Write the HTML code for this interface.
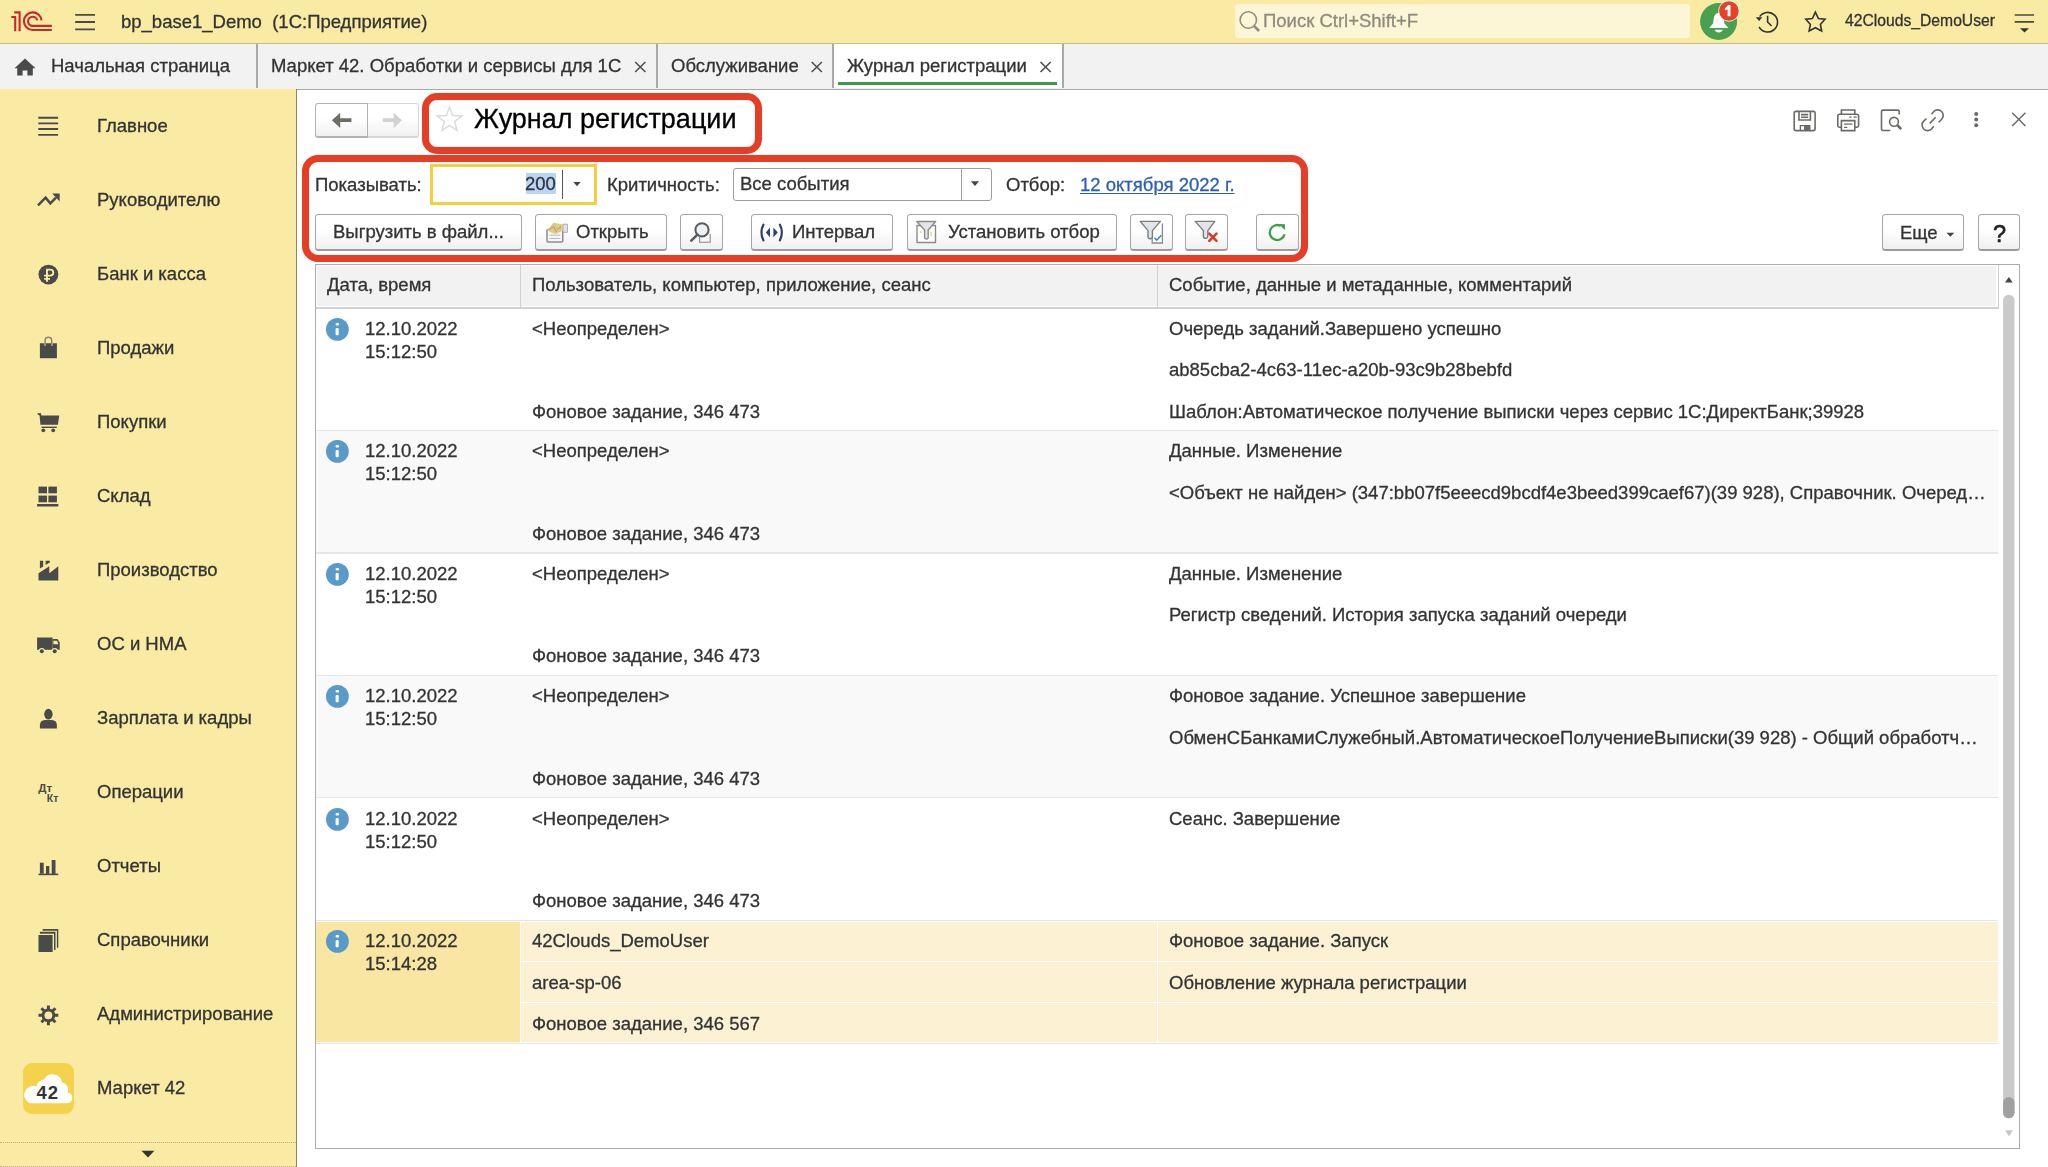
<!DOCTYPE html>
<html lang="ru"><head><meta charset="utf-8"><title>Журнал регистрации</title>
<style>
*{box-sizing:border-box;margin:0;padding:0}
html,body{width:2048px;height:1167px;overflow:hidden;background:#fff}
body{-webkit-font-smoothing:antialiased;position:relative;font-family:"Liberation Sans",sans-serif;font-size:18.5px;line-height:20px;color:#333}
.a{position:absolute}
.t{position:absolute;will-change:transform;-webkit-text-stroke:0.3px currentColor;white-space:nowrap;font-size:18.5px;line-height:20px}
#hdr{left:0;top:0;width:2048px;height:44px;background:#f9eba3;border-bottom:1px solid #c6ba7c}
#tabs{left:0;top:44px;width:2048px;height:45.5px;background:#f2f2f2;border-bottom:1.5px solid #a9a9a9}
.tsep{position:absolute;top:44px;width:1.5px;height:44px;background:#a9a9a9}
#side{left:0;top:89px;width:297px;height:1078px;background:#f9eba3;border-right:1px solid #8f8761}
.btn{position:absolute;height:37.8px;border:1.2px solid #a6a6a6;border-bottom:2.6px solid #9c9c9c;border-radius:3.5px;background:linear-gradient(#fff,#fff 40%,#f0f0f0)}
.red{position:absolute;border:7px solid #e63e26;border-radius:15px}
</style></head><body>

<!-- header -->
<div id="hdr" class="a"></div>
<svg class="a" style="left:0;top:0" width="60" height="44" viewBox="0 0 60 44" fill="none" stroke="#c9282b" stroke-width="2.1">
<path d="M11.3 17H15.2V31.2M14.2 12.4H19.6V31.2"/>
<path d="M41.5 20.4A8.8 8.8 0 1 0 32.7 30H51.8"/>
<path d="M37.2 20.4A4.6 4.6 0 1 0 32.7 25.9H51.8"/>
</svg>
<svg class="a" style="left:70px;top:8px" width="30" height="28" viewBox="70 8 30 28" stroke="#4a4a4a" stroke-width="1.8">
<path d="M75.2 14.9H95M75.2 22H95M75.2 29.3H95"/>
</svg>
<div class="t" style="left:121px;top:12px">bp_base1_Demo&nbsp; (1С:Предприятие)</div>
<div class="a" style="left:1235px;top:4px;width:455px;height:34px;background:#fcf5d6;border-radius:3px"></div>
<svg class="a" style="left:1230px;top:0" width="40" height="44" viewBox="1230 0 40 44" fill="none" stroke="#8f8c80" stroke-width="1.6">
<circle cx="1248.3" cy="20" r="8.2"/><path d="M1254.3 26.2L1259 31" stroke-width="2.6"/>
</svg>
<div class="t" style="left:1263px;top:11px;color:#8e8b7e">Поиск Ctrl+Shift+F</div>
<svg class="a" style="left:1690px;top:0" width="60" height="44" viewBox="1690 0 60 44">
<circle cx="1718.6" cy="21.5" r="18.5" fill="#49a04f"/>
<path d="M1718.6 13C1715.6 13 1714.2 15.5 1713.7 19L1713 23.5L1709.2 28H1728.4L1724.5 23.5L1723.6 19C1723.1 15.5 1721.6 13 1718.6 13ZM1714.7 29.8H1722.8C1722 31.6 1720.6 32.4 1718.75 32.4C1716.9 32.4 1715.5 31.6 1714.7 29.8Z" fill="#fff"/>
<circle cx="1728.9" cy="11" r="10.7" fill="#fff" opacity=".75"/>
<circle cx="1728.9" cy="11" r="9.8" fill="#e8412a"/>
<path d="M1727.6 16.2V9.2L1724.9 10.4V8.4L1728.1 4.9H1730.5V16.2Z" fill="#fff"/>
</svg>
<svg class="a" style="left:1750px;top:0" width="90" height="44" viewBox="1750 0 90 44" fill="none" stroke="#333" stroke-width="1.6">
<path d="M1759.7 16.6A9.8 9.8 0 1 1 1759.1 26.8"/>
<path d="M1755.8 17.2H1762.3L1759.1 20.9Z" fill="#333" stroke="none"/>
<path d="M1767.6 15.8V22L1771.6 26"/>
<path d="M1815.4 12.2L1818.4 18.6L1825 19.2L1820.4 24.4L1821.7 31L1815.4 27.7L1809.1 31L1810.4 24.4L1805.8 19.2L1812.4 18.6Z" stroke-linejoin="miter"/>
</svg>
<div class="t" style="left:1845px;top:11px;font-size:15.7px;color:#333">42Clouds_DemoUser</div>
<svg class="a" style="left:2010px;top:8px" width="30" height="30" viewBox="2010 8 30 30">
<path d="M2014.7 15H2034M2014.7 21.8H2034" stroke="#4a4a4a" stroke-width="1.7"/>
<path d="M2020 28.2H2029L2024.5 32.6Z" fill="#333"/>
</svg>

<!-- tabs -->
<div id="tabs" class="a"></div>
<div class="a" style="left:833px;top:44px;width:229px;height:44px;background:#fff"></div>
<div class="tsep" style="left:256px"></div>
<div class="tsep" style="left:656px"></div>
<div class="tsep" style="left:832px"></div>
<div class="tsep" style="left:1062px"></div>
<svg class="a" style="left:10px;top:52px" width="30" height="30" viewBox="10 52 30 30">
<path d="M25 58.5L14.5 68.3H17.2V75.6H22.6V70.6H27.4V75.6H32.8V68.3H35.5Z" fill="#4a4a4a"/>
</svg>
<div class="t" style="left:51px;top:56px">Начальная страница</div>
<div class="t" style="left:271px;top:56px">Маркет 42. Обработки и сервисы для 1С</div>
<div class="t" style="left:671px;top:56px">Обслуживание</div>
<div class="t" style="left:847px;top:56px">Журнал регистрации</div>
<svg class="a" style="left:0;top:50px" width="1070" height="30" viewBox="0 50 1070 30" stroke="#4a4a4a" stroke-width="1.5">
<path d="M635.2 62L645.4 72M645.4 62L635.2 72"/>
<path d="M811.7 62L821.9 72M821.9 62L811.7 72"/>
<path d="M1040.5 62L1050.7 72M1050.7 62L1040.5 72"/>
</svg>
<div class="a" style="left:838px;top:82px;width:219px;height:3px;background:#3b9a4a"></div>

<!-- sidebar -->
<div id="side" class="a"></div>
<svg class="a" style="left:0;top:89px" width="296" height="1078" viewBox="0 89 296 1078" fill="#4a4a4a">
<path d="M38.3 117.7H58.1M38.3 123.4H58.1M38.3 129H58.1M38.3 134.9H58.1" stroke="#4a4a4a" stroke-width="1.9"/>
<path d="M38 205.3L45.6 197.7L50.3 203.4L56 197.6" fill="none" stroke="#4a4a4a" stroke-width="2.5"/>
<path d="M52.2 193.6H59.7V201.4Z"/>
<circle cx="48.4" cy="274.6" r="9.9"/>
<path d="M47 281.7V269.6H50.3A3 3 0 0 1 50.3 275.6H44.2M44.2 278.9H50" fill="none" stroke="#f9eba3" stroke-width="1.9"/>
<path d="M39.9 343.3H44.3V346H45.9V343.3H51V346H52.6V343.3H56.9V358.3H39.9Z"/>
<path d="M45.1 346V340.5A3.2 3.2 0 0 1 51.7 340.5V346" fill="none" stroke="#8c8770" stroke-width="1.5"/>
<path d="M37.1 413.7H40.9L41.5 415.4H59.3L57.9 424.8H40.4L39.6 415.5" /><path d="M37.1 413.2H41V415.5H39.6Z"/>
<path d="M41.5 427.3H56.8" stroke="#4a4a4a" stroke-width="1.4"/>
<circle cx="43.3" cy="430.3" r="1.9"/><circle cx="53.2" cy="430.3" r="1.9"/>
<rect x="38.5" y="486.6" width="8.5" height="6.7"/><rect x="48.4" y="486.6" width="8.5" height="6.7"/>
<rect x="38.5" y="495.6" width="8.5" height="6.7"/><rect x="48.4" y="495.6" width="8.5" height="6.7"/>
<rect x="37.1" y="504" width="21.2" height="2.5"/>
<path d="M38.5 580.5V573.2L49.3 566.3V573.2L58.3 566.3V580.5Z"/>
<path d="M39.9 560.7H43.2V566.6L39.9 568.6Z"/><path d="M45.6 560.7H49.8V562.4L45.6 565Z"/>
<path d="M37.1 637.5H52.6V649.8H37.1Z"/><path d="M52.6 639H57.5L59.7 642.5V649.8H52.6Z"/>
<path d="M53.4 640.8H57L58.4 644.2H53.4Z" fill="#f9eba3"/>
<circle cx="41.8" cy="651.2" r="3.1" fill="#f9eba3"/><circle cx="54.7" cy="651.2" r="3.1" fill="#f9eba3"/>
<circle cx="41.8" cy="651.2" r="2"/><circle cx="54.7" cy="651.2" r="2"/>
<ellipse cx="48.4" cy="714.2" rx="4.2" ry="5.4"/>
<path d="M39.9 728.6V725A5.3 5.3 0 0 1 45 720H51.8A5.3 5.3 0 0 1 56.9 725V728.6Z"/>
<text x="38.3" y="792" font-family="Liberation Sans" font-weight="bold" font-size="11.5">Дт</text>
<text x="46.8" y="802.4" font-family="Liberation Sans" font-weight="bold" font-size="10.5">Кт</text>
<rect x="38.5" y="873.6" width="19.8" height="1.6"/>
<rect x="39.9" y="862.7" width="3.8" height="11"/><rect x="46" y="866" width="3.3" height="8"/><rect x="51.7" y="860" width="3.8" height="14"/>
<path d="M42.7 929H58.3V947.8H56.9V930.8H42.7Z"/><path d="M39.9 931.8H55.5V950H54V933.7H39.9Z"/>
<rect x="38.5" y="935" width="14.1" height="17"/>
<g transform="translate(48.4 1015.3)">
<path d="M0-9.9V9.9M-9.9 0H9.9M-7-7L7 7M-7 7L7-7" stroke="#4a4a4a" stroke-width="3"/>
<circle r="6.9"/><circle r="3.9" fill="#f9eba3"/>
</g>
</svg>
<div class="a" style="left:23px;top:1063px;width:51px;height:51px;border-radius:9px;background:#f5d24b"></div>
<svg class="a" style="left:23px;top:1063px" width="51" height="51" viewBox="23 1063 51 51">
<path d="M30 1103.3H66A5.5 5.5 0 0 0 67.5 1092.3A7 7 0 0 0 62 1082.5A9.5 9.5 0 0 0 44.2 1079.5A8 8 0 0 0 36.5 1086.5A8.5 8.5 0 0 0 30 1103.3Z" fill="#fff"/>
<text x="36.6" y="1099.3" font-family="Liberation Sans" font-weight="bold" font-size="18.5" fill="#333" textLength="21.5">42</text>
</svg>
<div class="a" style="left:0;top:1142px;width:296px;height:0;border-top:1.2px dotted #bdb27c"></div><div class="a" style="left:0;top:1166px;width:296px;height:0;border-top:1.2px dotted #bdb27c"></div>
<svg class="a" style="left:138px;top:1148px" width="20" height="12" viewBox="138 1148 20 12"><path d="M141.5 1150.7H154.4L148 1157.5Z" fill="#333"/></svg>
<div class="t" style="left:97px;top:116px">Главное</div>
<div class="t" style="left:97px;top:190px">Руководителю</div>
<div class="t" style="left:97px;top:264px">Банк и касса</div>
<div class="t" style="left:97px;top:338px">Продажи</div>
<div class="t" style="left:97px;top:412px">Покупки</div>
<div class="t" style="left:97px;top:486px">Склад</div>
<div class="t" style="left:97px;top:560px">Производство</div>
<div class="t" style="left:97px;top:634px">ОС и НМА</div>
<div class="t" style="left:97px;top:708px">Зарплата и кадры</div>
<div class="t" style="left:97px;top:782px">Операции</div>
<div class="t" style="left:97px;top:856px">Отчеты</div>
<div class="t" style="left:97px;top:930px">Справочники</div>
<div class="t" style="left:97px;top:1004px">Администрирование</div>
<div class="t" style="left:97px;top:1078px">Маркет 42</div>


<!-- main top -->
<div class="btn" style="left:315px;top:103px;width:53px;height:35px;border-radius:3px 0 0 3px;border-color:#b3b3b3"></div>
<div class="btn" style="left:367px;top:103px;width:52px;height:35px;border-radius:0 3px 3px 0;border-color:#d6d6d6"></div>
<div class="a" style="left:367px;top:103px;width:1px;height:35px;background:#b3b3b3"></div>
<svg class="a" style="left:320px;top:105px" width="95" height="30" viewBox="320 105 95 30">
<path d="M331.9 120.3L340.2 112.7V118.2H351.4V121.9H340.2V128Z" fill="#6e6d68"/>
<path d="M402 120.3L393.7 112.7V118.2H382.8V121.9H393.7V128Z" fill="#d2d2d2"/>
</svg>
<div class="red" style="left:422px;top:93px;width:340px;height:61px;border-radius:15px"></div>
<svg class="a" style="left:430px;top:100px" width="40" height="40" viewBox="430 100 40 40">
<path d="M449.5 107L452.6 115.5L461.8 115.9L454.6 121.6L457.1 130.5L449.5 125.4L441.9 130.5L444.4 121.6L437.2 115.9L446.4 115.5Z" fill="none" stroke="#dcdcdc" stroke-width="1.5" stroke-linejoin="miter"/>
</svg>
<div class="t" style="left:474px;top:104px;font-size:27px;line-height:30px;color:#000">Журнал регистрации</div>

<svg class="a" style="left:1780px;top:100px" width="260" height="40" viewBox="1780 100 260 40" fill="none" stroke="#6b6b66" stroke-width="1.6">
<path d="M1796 111.4H1813.3A1.8 1.8 0 0 1 1815.1 113.2V128.8A1.8 1.8 0 0 1 1813.3 130.6H1796A1.8 1.8 0 0 1 1794.2 128.8V113.2A1.8 1.8 0 0 1 1796 111.4Z"/>
<path d="M1799 111.6V120H1810.4V111.6M1801 114.6H1808.2M1801 117.2H1808.2"/>
<path d="M1800.4 130.6V125.6H1809.8V130.6" stroke-width="1.4"/>
<rect x="1804" y="125.6" width="5.8" height="5" fill="#6b6b66" stroke="none"/>
<path d="M1841.4 114.2V110H1854.8V114.2M1841.4 127.3H1839.6A1.8 1.8 0 0 1 1837.8 125.5V116A1.8 1.8 0 0 1 1839.6 114.2H1856.8A1.8 1.8 0 0 1 1858.6 116V125.5A1.8 1.8 0 0 1 1856.8 127.3H1854.8"/>
<path d="M1841.4 120.6H1854.8V130.6H1841.4Z"/><path d="M1844 124.1H1852.4M1844 127.3H1847.3M1849.3 117.1H1851.5M1853.5 117.1H1856.7" stroke-width="1.3"/>
<path d="M1899.2 114.5V111.6A1.5 1.5 0 0 0 1897.7 110.1H1883A1.5 1.5 0 0 0 1881.5 111.6V129A1.5 1.5 0 0 0 1883 130.5H1890.3"/>
<circle cx="1894" cy="121.8" r="4.4"/><path d="M1897.3 125.2L1901.2 129.1" stroke-width="2.6"/>
<path d="M1931.5 114.2L1933.8 111.5A5.5 5.5 0 0 1 1941.6 119.3L1938.7 122.3M1926.5 118.5L1923.7 121.2A5.5 5.5 0 0 0 1931.5 129L1933.8 126.3M1929.7 123.4L1935.7 117.2"/>
<circle cx="1976.2" cy="113.9" r="2" fill="#6b6b66" stroke="none"/><circle cx="1976.2" cy="119.6" r="2" fill="#6b6b66" stroke="none"/><circle cx="1976.2" cy="125.3" r="2" fill="#6b6b66" stroke="none"/>
<path d="M2012.2 112.8L2025.4 126M2025.4 112.8L2012.2 126" stroke-width="1.5"/>
</svg>

<!-- filter panel -->
<div class="red" style="left:302px;top:155px;width:1006px;height:107px;border-radius:16px"></div>
<div class="t" style="left:315px;top:175px">Показывать:</div>
<div class="a" style="left:430px;top:164px;width:167px;height:41px;border:3px solid #f4d03f;background:#fff"></div>
<div class="a" style="left:526px;top:173px;width:30px;height:21px;background:#b8d4f6"></div>
<div class="t" style="left:525px;top:174px">200</div>
<div class="a" style="left:562px;top:170px;width:1.3px;height:29px;background:#555"></div>
<svg class="a" style="left:570px;top:178px" width="14" height="12" viewBox="570 178 14 12"><path d="M573.3 181.9H580.7L577 186.3Z" fill="#444"/></svg>
<div class="t" style="left:607px;top:175px">Критичность:</div>
<div class="a" style="left:733px;top:168px;width:259px;height:33px;border:1.3px solid #9e9e9e;border-radius:3px;background:#fff"></div>
<div class="a" style="left:961px;top:169px;width:1.3px;height:31px;background:#9e9e9e"></div>
<svg class="a" style="left:965px;top:178px" width="20" height="12" viewBox="965 178 20 12"><path d="M970.9 181.2H979.1L975 186Z" fill="#444"/></svg>
<div class="t" style="left:740px;top:174px">Все события</div>
<div class="t" style="left:1006px;top:175px">Отбор:</div>
<div class="t" style="left:1080px;top:175px;color:#2b5fb4;text-decoration:underline;text-underline-offset:2px">12 октября 2022 г.</div>

<div class="btn" style="left:315px;top:213.5px;width:207px"></div>
<div class="t" style="left:333px;top:222px">Выгрузить в файл...</div>
<div class="btn" style="left:535px;top:213.5px;width:132px"></div>
<div class="t" style="left:576px;top:222px">Открыть</div>
<div class="btn" style="left:680px;top:213.5px;width:43px"></div>
<div class="btn" style="left:751px;top:213.5px;width:142px"></div>
<div class="t" style="left:792px;top:222px">Интервал</div>
<div class="btn" style="left:907px;top:213.5px;width:210px"></div>
<div class="t" style="left:948px;top:222px">Установить отбор</div>
<div class="btn" style="left:1130px;top:213.5px;width:43px"></div>
<div class="btn" style="left:1185px;top:213.5px;width:43px"></div>
<div class="btn" style="left:1256px;top:213.5px;width:43px"></div>
<div class="btn" style="left:1882px;top:213.5px;width:82px"></div>
<div class="t" style="left:1900px;top:223px">Еще</div>
<svg class="a" style="left:1940px;top:228px" width="20" height="12" viewBox="1940 228 20 12"><path d="M1946.5 232.8H1954.3L1950.4 236.8Z" fill="#444"/></svg>
<div class="btn" style="left:1978px;top:213.5px;width:42px"></div>
<div class="t" style="left:1992.8px;top:223.8px;font-size:23.5px;-webkit-text-stroke:0.6px #222;color:#222">?</div>


<svg class="a" style="left:540px;top:215px" width="770" height="35" viewBox="540 215 770 35">
<rect x="547" y="229.6" width="15.8" height="12.5" rx="1" fill="#f4f6f8" stroke="#8d8d8d" stroke-width="1.5"/>
<path d="M549.5 235.2H560.3M549.5 238.5H560.3" stroke="#b8bcc2" stroke-width="1"/>
<path d="M563 224.2H567.4V232.3H563Z" fill="#e6e6e6" stroke="#9a9a9a" stroke-width=".8"/>
<path d="M547.3 230.2L553.4 222.8L563.1 224.5L563 230.2L556 234L552.5 233Z" fill="#dccb86"/>
<path d="M549 229.5L553.6 226.5L556.5 232M557 229.5L561 226.8" stroke="#c9503a" stroke-width=".9" fill="none" opacity=".6"/>
<circle cx="702" cy="229.8" r="6.6" fill="#eef1f4" stroke="#5a5a5a" stroke-width="2"/>
<path d="M697.4 234.6L691.3 240.6" stroke="#5a5a5a" stroke-width="2.6" stroke-linecap="round"/>
<path d="M699.6 236.5V242.2H710.2V234" fill="none" stroke="#8a8a8a" stroke-width="1.1"/>
<path d="M763.5 224.6Q759.3 232.4 763.5 240.4M779.8 224.6Q784 232.4 779.8 240.4" fill="none" stroke="#2e3f66" stroke-width="2.2" stroke-linecap="round"/>
<path d="M765.8 232.4L770 227.6V237.2Z M777.8 232.4L773.4 227.6V237.2Z" fill="#2e4272"/>
<path d="M917 225.5H935.5V242.5H917Z" fill="#fff" stroke="#8a8a8a" stroke-width="1.4" stroke-linejoin="round"/>
<path d="M916.8 221.5H935.6L928.2 230V237.2A1.8 1.8 0 0 1 924.6 237.2V230Z" fill="#e3e6e9" stroke="#8a8a8a" stroke-width="1.4" stroke-linejoin="round"/>
<circle cx="920.5" cy="232" r=".9" fill="#e8cf70"/><circle cx="931.2" cy="232.5" r=".9" fill="#e8cf70"/><circle cx="931.2" cy="235" r=".9" fill="#e8cf70"/>
<path d="M1152.2 227V243H1162.4V223.5" fill="#fff" stroke="#8a8a8a" stroke-width="1.3"/>
<path d="M1140.3 221.4H1160.4L1152.4 230.6V236.6A2.2 2.2 0 0 1 1148 236.6V230.6Z" fill="#e3e6e9" stroke="#7d7d7d" stroke-width="1.4" stroke-linejoin="round"/>
<path d="M1154.4 237.7L1156.8 240.2L1161.3 235.3" fill="none" stroke="#3b7fd0" stroke-width="1.6"/>
<path d="M1195.2 221.4H1214.8L1207.8 230.6V236.2A2.2 2.2 0 0 1 1203.4 236.2V230.6Z" fill="#e3e6e9" stroke="#7d7d7d" stroke-width="1.4" stroke-linejoin="round"/>
<path d="M1209.3 233.6L1216.5 240.8M1216.5 233.6L1209.3 240.8" stroke="#d63b2c" stroke-width="2.6" stroke-linecap="round"/>
<path d="M1284.6 234.2A7.5 7.5 0 1 1 1280.8 225.9" fill="none" stroke="#3f9e4b" stroke-width="2.3"/>
<path d="M1279 224L1285 224.2L1284.8 230.2Z" fill="#3f9e4b"/>
</svg>


<!-- table -->
<div class="a" style="left:315px;top:264px;width:1705px;height:885px;border:1.4px solid #acacac;border-top-width:1.6px;background:#fff"></div>
<div class="a" style="left:317px;top:266px;width:1679px;height:40px;background:#f2f2f2"></div>
<div class="a" style="left:316px;top:307px;width:1683px;height:1.6px;background:#d2d2d2"></div>
<div class="a" style="left:519.5px;top:265px;width:1.3px;height:43px;background:#d0d0d0"></div>
<div class="a" style="left:1157px;top:265px;width:1.3px;height:43px;background:#d0d0d0"></div>
<div class="a" style="left:1998px;top:265px;width:1.2px;height:43px;background:#d0d0d0"></div>
<div class="t" style="left:327px;top:275px">Дата, время</div>
<div class="t" style="left:532px;top:275px">Пользователь, компьютер, приложение, сеанс</div>
<div class="t" style="left:1169px;top:275px">Событие, данные и метаданные, комментарий</div>

<div class="a" style="left:316px;top:430.0px;width:1682px;height:1.3px;background:#e6e6e6"></div>
<svg class="a" style="left:325px;top:318px" width="24" height="24" viewBox="0 0 24 24"><circle cx="12.4" cy="11.4" r="11.4" fill="#5a9ac8"/><rect x="10.6" y="4.9" width="3.5" height="2.6" rx="1.1" fill="#fff"/><rect x="10.6" y="9.9" width="3.1" height="7.3" rx="1" fill="#fff"/></svg>
<div class="t" style="left:365px;top:319px">12.10.2022</div>
<div class="t" style="left:365px;top:342px">15:12:50</div>
<div class="t" style="left:532px;top:319.0px">&lt;Неопределен&gt;</div>
<div class="t" style="left:532px;top:401.6px">Фоновое задание, 346 473</div>
<div class="t" style="left:1169px;top:319.0px">Очередь заданий.Завершено успешно</div>
<div class="t" style="left:1169px;top:360.3px">ab85cba2-4c63-11ec-a20b-93c9b28bebfd</div>
<div class="t" style="left:1169px;top:401.6px">Шаблон:Автоматическое получение выписки через сервис 1С:ДиректБанк;39928</div>
<div class="a" style="left:316px;top:431.3px;width:1682px;height:121.40000000000003px;background:#f9f9f9"></div>
<div class="a" style="left:316px;top:552.4000000000001px;width:1682px;height:1.3px;background:#e6e6e6"></div>
<svg class="a" style="left:325px;top:440.3px" width="24" height="24" viewBox="0 0 24 24"><circle cx="12.4" cy="11.4" r="11.4" fill="#5a9ac8"/><rect x="10.6" y="4.9" width="3.5" height="2.6" rx="1.1" fill="#fff"/><rect x="10.6" y="9.9" width="3.1" height="7.3" rx="1" fill="#fff"/></svg>
<div class="t" style="left:365px;top:441.3px">12.10.2022</div>
<div class="t" style="left:365px;top:464.3px">15:12:50</div>
<div class="t" style="left:532px;top:441.3px">&lt;Неопределен&gt;</div>
<div class="t" style="left:532px;top:523.9px">Фоновое задание, 346 473</div>
<div class="t" style="left:1169px;top:441.3px">Данные. Изменение</div>
<div class="t" style="left:1169px;top:482.6px">&lt;Объект не найден&gt; (347:bb07f5eeecd9bcdf4e3beed399caef67)(39 928), Справочник. Очеред…</div>
<div class="a" style="left:316px;top:674.9000000000001px;width:1682px;height:1.3px;background:#e6e6e6"></div>
<svg class="a" style="left:325px;top:562.7px" width="24" height="24" viewBox="0 0 24 24"><circle cx="12.4" cy="11.4" r="11.4" fill="#5a9ac8"/><rect x="10.6" y="4.9" width="3.5" height="2.6" rx="1.1" fill="#fff"/><rect x="10.6" y="9.9" width="3.1" height="7.3" rx="1" fill="#fff"/></svg>
<div class="t" style="left:365px;top:563.7px">12.10.2022</div>
<div class="t" style="left:365px;top:586.7px">15:12:50</div>
<div class="t" style="left:532px;top:563.7px">&lt;Неопределен&gt;</div>
<div class="t" style="left:532px;top:646.3px">Фоновое задание, 346 473</div>
<div class="t" style="left:1169px;top:563.7px">Данные. Изменение</div>
<div class="t" style="left:1169px;top:605.0px">Регистр сведений. История запуска заданий очереди</div>
<div class="a" style="left:316px;top:676.2px;width:1682px;height:121.29999999999995px;background:#f9f9f9"></div>
<div class="a" style="left:316px;top:797.2px;width:1682px;height:1.3px;background:#e6e6e6"></div>
<svg class="a" style="left:325px;top:685.2px" width="24" height="24" viewBox="0 0 24 24"><circle cx="12.4" cy="11.4" r="11.4" fill="#5a9ac8"/><rect x="10.6" y="4.9" width="3.5" height="2.6" rx="1.1" fill="#fff"/><rect x="10.6" y="9.9" width="3.1" height="7.3" rx="1" fill="#fff"/></svg>
<div class="t" style="left:365px;top:686.2px">12.10.2022</div>
<div class="t" style="left:365px;top:709.2px">15:12:50</div>
<div class="t" style="left:532px;top:686.2px">&lt;Неопределен&gt;</div>
<div class="t" style="left:532px;top:768.8px">Фоновое задание, 346 473</div>
<div class="t" style="left:1169px;top:686.2px">Фоновое задание. Успешное завершение</div>
<div class="t" style="left:1169px;top:727.5px">ОбменСБанкамиСлужебный.АвтоматическоеПолучениеВыписки(39 928) - Общий обработч…</div>
<div class="a" style="left:316px;top:919.9000000000001px;width:1682px;height:1.3px;background:#e6e6e6"></div>
<svg class="a" style="left:325px;top:807.5px" width="24" height="24" viewBox="0 0 24 24"><circle cx="12.4" cy="11.4" r="11.4" fill="#5a9ac8"/><rect x="10.6" y="4.9" width="3.5" height="2.6" rx="1.1" fill="#fff"/><rect x="10.6" y="9.9" width="3.1" height="7.3" rx="1" fill="#fff"/></svg>
<div class="t" style="left:365px;top:808.5px">12.10.2022</div>
<div class="t" style="left:365px;top:831.5px">15:12:50</div>
<div class="t" style="left:532px;top:808.5px">&lt;Неопределен&gt;</div>
<div class="t" style="left:532px;top:891.1px">Фоновое задание, 346 473</div>
<div class="t" style="left:1169px;top:808.5px">Сеанс. Завершение</div>
<div class="a" style="left:316px;top:921.7px;width:203.5px;height:120.7px;background:#f8e6a2"></div>
<div class="a" style="left:520.8px;top:921.7px;width:1477px;height:120.7px;background:#fcf2d3"></div>
<div class="a" style="left:1157px;top:921.7px;width:1.2px;height:120.7px;background:#fff"></div>
<div class="a" style="left:520.8px;top:960.6px;width:1477px;height:1.3px;background:#fff"></div>
<div class="a" style="left:520.8px;top:1002.2px;width:1477px;height:1.3px;background:#fff"></div>
<div class="a" style="left:316px;top:1042.9px;width:1682px;height:1.3px;background:#e6e6e6"></div>
<svg class="a" style="left:325px;top:930.2px" width="24" height="24" viewBox="0 0 24 24"><circle cx="12.4" cy="11.4" r="11.4" fill="#5a9ac8"/><rect x="10.6" y="4.9" width="3.5" height="2.6" rx="1.1" fill="#fff"/><rect x="10.6" y="9.9" width="3.1" height="7.3" rx="1" fill="#fff"/></svg>
<div class="t" style="left:365px;top:931.2px">12.10.2022</div>
<div class="t" style="left:365px;top:954.2px">15:14:28</div>
<div class="t" style="left:532px;top:931.2px">42Clouds_DemoUser</div>
<div class="t" style="left:532px;top:972.5px">area-sp-06</div>
<div class="t" style="left:532px;top:1013.8px">Фоновое задание, 346 567</div>
<div class="t" style="left:1169px;top:931.2px">Фоновое задание. Запуск</div>
<div class="t" style="left:1169px;top:972.5px">Обновление журнала регистрации</div>

<svg class="a" style="left:1999px;top:266px" width="20" height="880" viewBox="1999 266 20 880">
<path d="M2005 282.4H2012.7L2008.85 276.9Z" fill="#444"/>
<rect x="2003.1" y="294.7" width="11.4" height="823.5" rx="5.7" fill="#c9cac9"/>
<rect x="2003.1" y="1097" width="11.4" height="21.3" rx="5.7" fill="#a0a0a0"/>
<path d="M2005.2 1130.3H2012.8L2009 1136.3Z" fill="#c4c4c4"/>
</svg>

</body></html>
